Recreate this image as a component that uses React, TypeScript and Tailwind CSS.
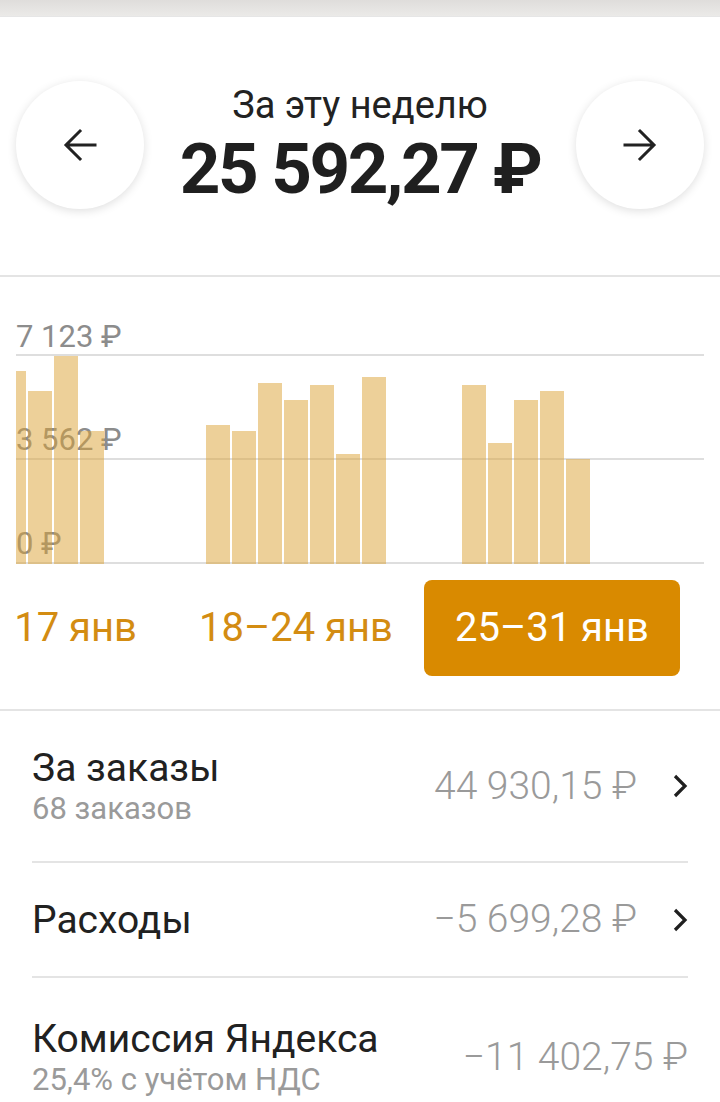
type Week = { label: string; bars: number[]; active?: boolean }

const WEEKS: Week[] = [
  { label: '11–17 янв', bars: [150, 180, 193, 173, 208, 133, 0] },
  { label: '18–24 янв', bars: [139, 133, 181, 164, 179, 110, 187] },
  { label: '25–31 янв', bars: [179, 121, 164, 173, 105, 0, 0], active: true },
]

const ROWS = [
  { title: 'За заказы', sub: '68 заказов', amount: '44 930,15 ₽', link: true, h: 'h-[152px]' },
  { title: 'Расходы', amount: '−5 699,28 ₽', link: true, h: 'h-[115px]' },
  { title: 'Комиссия Яндекса', sub: '25,4% с учётом НДС', amount: '−11 402,75 ₽', link: false, h: 'h-[158px]' },
]

function Arrow({ dir }: { dir: 'left' | 'right' }) {
  return (
    <button className="w-[128px] h-[128px] rounded-full bg-white shadow-[0_2px_10px_rgba(0,0,0,0.13)] flex items-center justify-center shrink-0">
      <svg width="34" height="34" viewBox="0 0 34 34" fill="none" stroke="#222" strokeWidth="3" strokeLinecap="square">
        {dir === 'left' ? (
          <path d="M32 17H4 M17 3 L3 17 L17 31" />
        ) : (
          <path d="M2 17H30 M17 3 L31 17 L17 31" />
        )}
      </svg>
    </button>
  )
}

function Chevron() {
  return (
    <svg width="16" height="24" viewBox="0 0 16 24" fill="none" stroke="#1f1f1f" strokeWidth="3.2">
      <path d="M3 2 L13 12 L3 22" />
    </svg>
  )
}

function Chart() {
  const gridTops = ['top-[34px]', 'top-[138px]', 'top-[242px]']
  const ticks = [
    { text: '7 123 ₽', cls: 'top-[1px]' },
    { text: '3 562 ₽', cls: 'top-[104px]' },
    { text: '0 ₽', cls: 'top-[208px]' },
  ]
  return (
    <div className="relative mx-4 mt-[43px] overflow-hidden">
      {/* axis: labels + grid lines sit under the bars */}
      {ticks.map((t) => (
        <div key={t.text} className={`absolute left-0 ${t.cls} text-[31px] leading-none text-[#8c8c8c]`}>
          {t.text}
        </div>
      ))}
      {gridTops.map((top) => (
        <div key={top} className={`absolute left-0 right-0 ${top} h-[2px] bg-[#dedede]`} />
      ))}

      <div className="relative flex gap-[76px] -ml-[66px]">
        {WEEKS.map((w) => (
          <div key={w.label} className="w-[180px] shrink-0 flex flex-col items-center">
            <div className="h-[244px] w-full flex items-end gap-[2px]">
              {w.bars.map((b, i) => (
                <div key={i} className="w-[24px] shrink-0 bg-[#dca133]/50" style={{ height: b }} />
              ))}
            </div>
            <div
              className={
                'mt-[16px] w-[256px] h-[96px] shrink-0 rounded-lg flex items-center justify-center text-[40px] ' +
                (w.active ? 'bg-[#d98a00] text-white' : 'text-[#d38c12]')
              }
            >
              {w.label}
            </div>
          </div>
        ))}
      </div>
    </div>
  )
}

export default function App() {
  return (
    <div className="w-[720px] min-h-[1102px] bg-white font-['Roboto',sans-serif] overflow-hidden">
      <div className="h-[17px] bg-gradient-to-b from-[#dfdddb] to-[#ebeae8] border-b border-[#e6e6e6]" />

      <div className="flex items-center justify-between px-4 pt-[62px]">
        <Arrow dir="left" />
        <div className="flex flex-col items-center pt-[4px]">
          <div className="text-[38px] leading-[44px] text-[#222]">За эту неделю</div>
          <div className="text-[71px] leading-[84px] font-bold tracking-[-2.5px] text-[#1f1f1f]">25 592,27 ₽</div>
        </div>
        <Arrow dir="right" />
      </div>

      <div className="mt-[64px] h-[2px] bg-[#e4e4e4]" />

      <Chart />

      <div className="mt-[33px] h-[2px] bg-[#e4e4e4]" />

      <div className="px-8">
        {ROWS.map((r, i) => (
          <div
            key={r.title}
            className={`${r.h} flex items-center justify-between ${i < ROWS.length - 1 ? 'border-b-2 border-[#e4e4e4]' : ''}`}
          >
            <div className="flex flex-col">
              <div className="text-[39px] leading-[46px] text-[#212121]">{r.title}</div>
              {r.sub && <div className="text-[31px] leading-[36px] text-[#9a9a9a]">{r.sub}</div>}
            </div>
            <div className="flex items-center">
              <div className="text-[39px] font-light text-[#9a9a9a]">{r.amount}</div>
              {r.link && (
                <div className="w-[51px] flex justify-end">
                  <Chevron />
                </div>
              )}
            </div>
          </div>
        ))}
      </div>
    </div>
  )
}
